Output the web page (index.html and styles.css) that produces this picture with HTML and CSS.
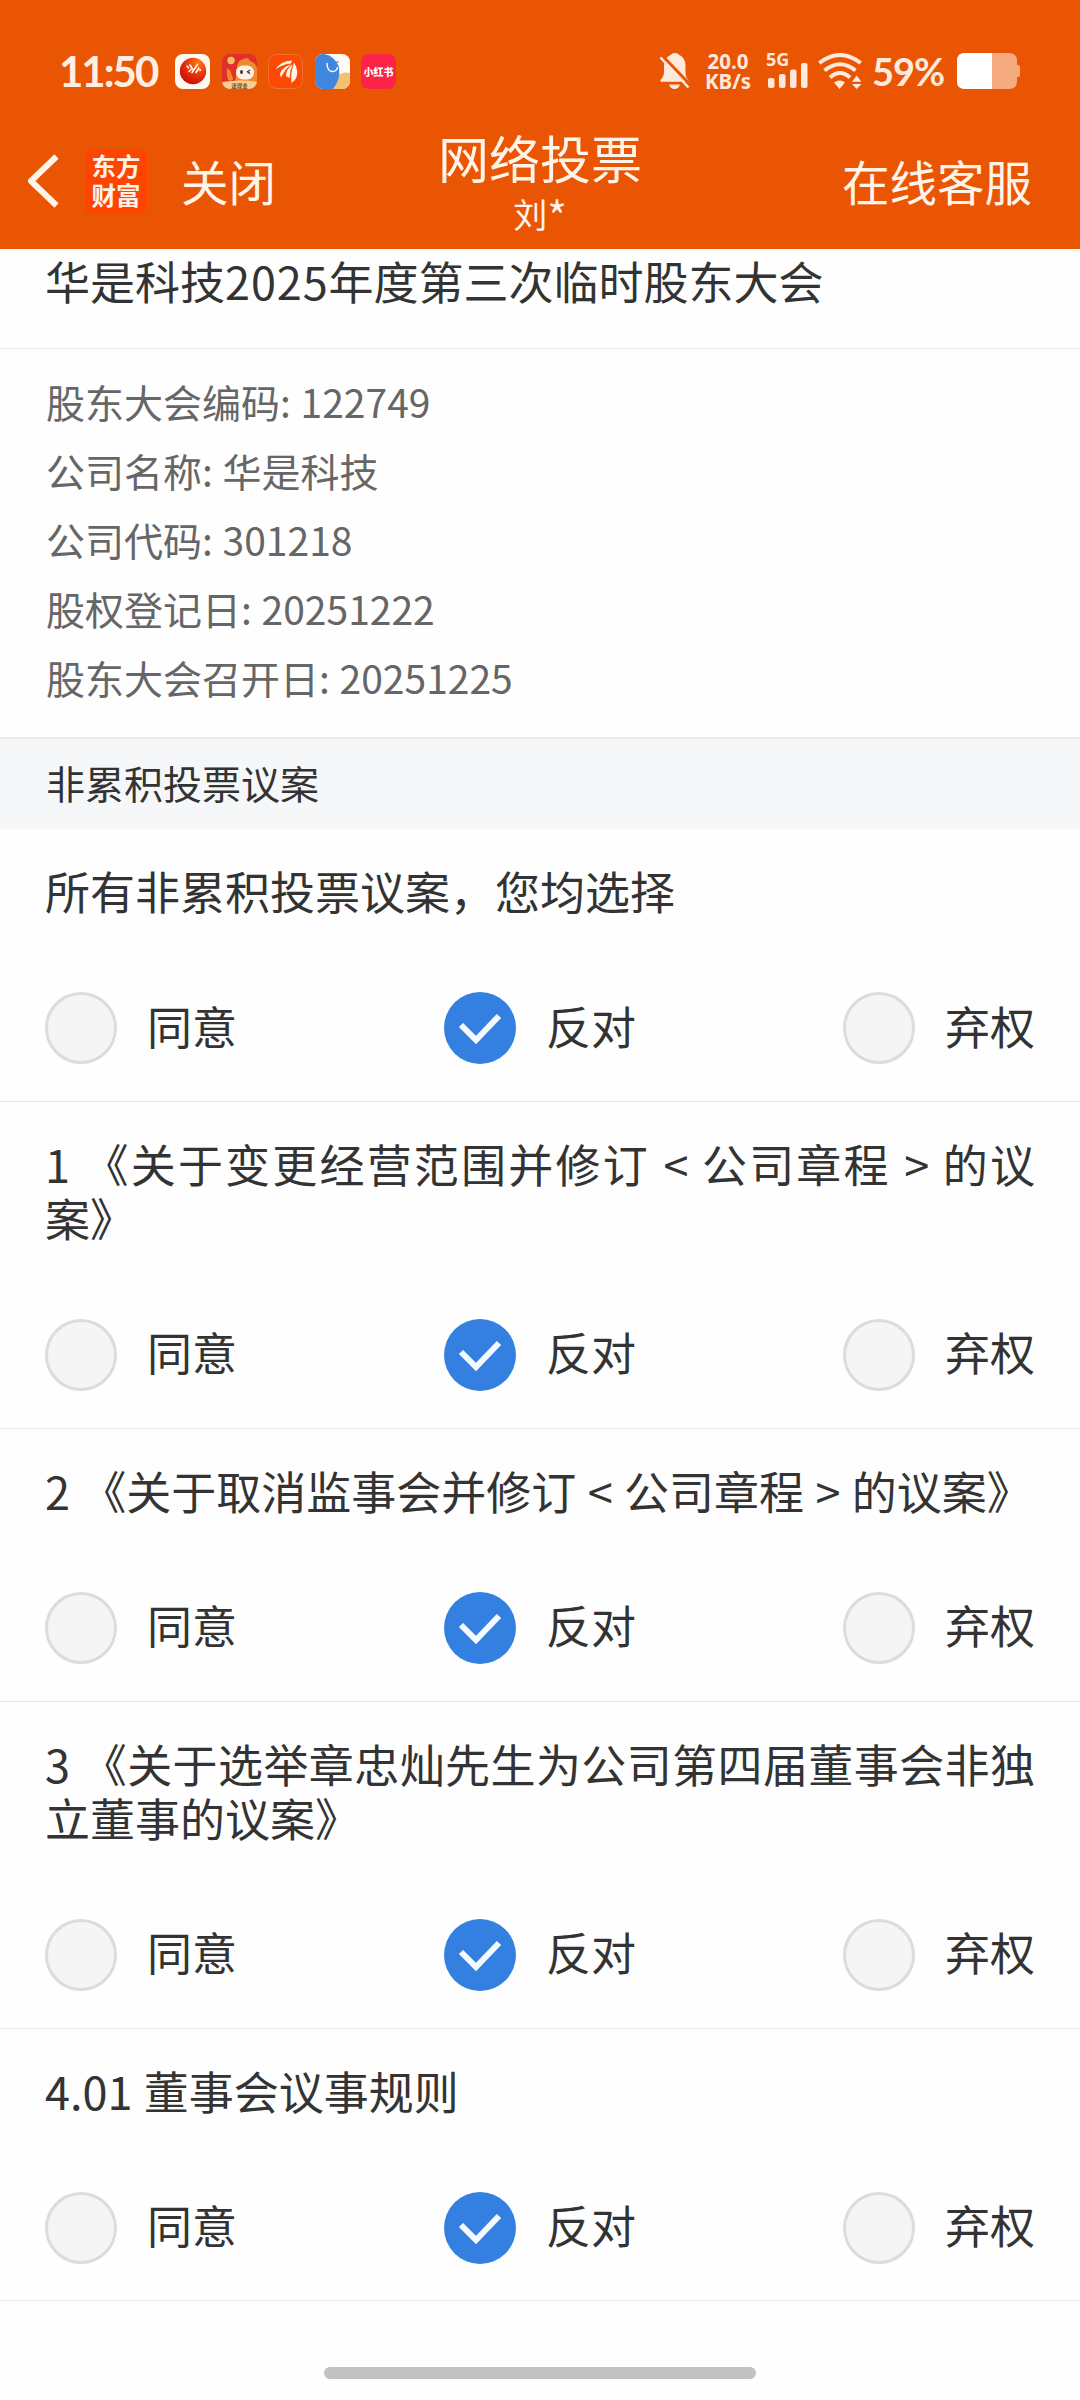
FILE: index.html
```html
<!DOCTYPE html>
<html lang="zh-CN">
<head>
<meta charset="utf-8">
<title>网络投票</title>
<link rel="stylesheet" href="styles.css">
</head>
<body>
<header class="header">
  <div class="status">
    <div class="status-left">
      <span class="time">11:50</span>
      <svg class="app" viewBox="0 0 35 35"><defs><radialGradient id="ball" cx=".7" cy=".2" r=".8"><stop offset="0" stop-color="#ff7a1c"/><stop offset=".5" stop-color="#ec3a0c"/><stop offset="1" stop-color="#c81408"/></radialGradient></defs><rect width="35" height="35" rx="8" fill="#fff8f2"/><circle cx="18" cy="17" r="13.2" fill="url(#ball)"/><path d="M12 12l1.500 2M15 11l2.500 4M14 17.500l2-2M17 18.500l5.500-8M21 18.500l3-4.500M25 16.500l.5-.8" stroke="#fff" stroke-width="1.500" fill="none" stroke-linecap="round"/></svg>
      <svg class="app" viewBox="0 0 35 35"><defs><clipPath id="tile"><rect width="35" height="35" rx="8"/></clipPath></defs><g clip-path="url(#tile)"><rect width="35" height="35" fill="#e0302c"/><path d="M15 12Q16 6 22 5Q26 2 28 7Q34 9 35 14V30H13z" fill="#f08a30"/><path d="M5 14q4 2 5 8q3 4-2 5q-4-1-3-13z" fill="#f08a30"/><circle cx="9" cy="6.500" r="3.700" fill="#fac060"/><rect x="14" y="11.500" width="18" height="14" rx="7" fill="#fff1e4"/><ellipse cx="19.500" cy="18" rx="1.500" ry="2" fill="#453431"/><path d="M28 16l-2.500 1.800 2.500 1.800" stroke="#453431" stroke-width="1.300" fill="none"/><path d="M0 28Q17 25 35 28V35H0z" fill="#f9cf90"/></g><text class="tiny" x="17.500" y="33.500" text-anchor="middle">送现金</text></svg>
      <svg class="app" viewBox="0 0 35 35"><rect x=".5" y=".5" width="34" height="34" rx="8" fill="#fc4a04" stroke="#f27230"/><path d="M7 16Q12 7 24 6.500L23 9.500Q14 10 7 16zM13 23.500Q11.500 21 12.500 18.500Q16 12 23.500 10.300Q17 15 13 23.500zM18 22Q18 15 24.500 10.500Q22 16 21.500 24zM23.500 29Q22 20 26 8.500Q32 18 27 26z" fill="#fff2e8"/></svg>
      <svg class="app" viewBox="0 0 35 35"><g clip-path="url(#tile)"><rect width="35" height="35" fill="#fefaf4"/><path d="M22 22Q28 17 35 19V35H18z" fill="#f2c274"/><path d="M0 0H9Q20 2 24 13Q26 25 18 35H0z" fill="#4186df"/></g><path d="M12 9Q12 18 18.500 17.500Q22 17 22.500 13" stroke="#f8faff" stroke-width="1.500" fill="none"/><circle cx="22.500" cy="8" r=".9" fill="#4186df"/></svg>
      <svg class="app" viewBox="0 0 35 35"><rect width="35" height="35" rx="8" fill="#fb2448"/><text class="red-text" x="17.500" y="21.500" text-anchor="middle">小红书</text></svg>
    </div>
    <div class="status-right">
      <svg class="bell" viewBox="0 0 32 36" fill="#ffe9dc"><path d="M16 0q3 0 4 1.800q6.500 3 6.500 11v7q0 5 4 9H1.500v-2q3.500-3 3.500-8v-6q0-8 7-11Q13 0 16 0z"/><path d="M10 31.500h11q-1.500 4.500-5.500 4.500t-5.500-4.500z"/><path d="M3 2.500L32 32.500" stroke="#ea5503" stroke-width="3"/><path d="M1.500 4.500L29.500 34.500" stroke="#ffe9dc" stroke-width="2.500"/></svg>
      <div class="speed"><span>20.0</span><span>KB/s</span></div>
      <div class="cell"><span>5G</span><svg viewBox="0 0 40 25" fill="#ffe9dc"><rect y="15" width="6.500" height="10" rx="2"/><rect x="11" y="11" width="6.500" height="14" rx="2"/><rect x="22" y="6.500" width="6.500" height="18.500" rx="2"/><rect x="33" y="0" width="6.500" height="25" rx="2"/></svg></div>
      <svg class="wifi" viewBox="0 0 44 36"><g fill="none" stroke="#ffe9dc" stroke-width="4"><path d="M1.300 10Q22-6 42.700 10"/><path d="M6.500 17.500Q22 5 37.500 17.500"/><path d="M12 24.500Q22 15.500 32 24.500"/></g><path d="M16 29.500q6-4 11 0l-5.500 6.500zM34 28.700L38.700 22.500l4.700 6.200zM34 31h9.400L38.700 36z" fill="#ffe9dc"/></svg>
      <span class="percent">59%</span>
      <svg class="battery" viewBox="0 0 63 36"><path d="M8 0H52q8 0 8 8v4h1q2 0 2 2v8q0 2-2 2h-1v4q0 8-8 8H8q-8 0-8-8V8q0-8 8-8z" fill="#f5aa80"/><path d="M8 0H35V36H8q-8 0-8-8V8q0-8 8-8z" fill="#fff"/></svg>
    </div>
  </div>
  <nav class="nav">
    <div class="nav-left">
      <svg class="back" viewBox="0 0 32 54"><path d="M29.500 2.500L4 27l25.500 24.500" fill="none" stroke="#fff4ea" stroke-width="6" stroke-linejoin="round"/></svg>
      <div class="logo"><span>东方</span><span>财富</span></div>
      <span class="nav-text">关闭</span>
    </div>
    <div class="nav-title"><h1>网络投票</h1><p>刘<span class="star">*</span></p></div>
    <span class="nav-text service">在线客服</span>
  </nav>
</header>
<main>
  <h2 class="meeting">华是科技<span class="year">2025</span>年度第三次临时股东大会</h2>
  <section class="info">
    <p>股东大会编码: 122749</p>
    <p>公司名称: 华是科技</p>
    <p>公司代码: 301218</p>
    <p>股权登记日: 20251222</p>
    <p>股东大会召开日: 20251225</p>
  </section>
  <h3 class="group">非累积投票议案</h3>
  <section class="item">
    <p class="subject">所有非累积投票议案，您均选择</p>
    <div class="options"><label class="opt"><i class="radio"></i><span>同意</span></label><label class="opt"><i class="radio on"><svg viewBox="0 0 72 72"><path d="M17 33L32 48L55 24"/></svg></i><span>反对</span></label><label class="opt"><i class="radio"></i><span>弃权</span></label></div>
  </section>
  <section class="item">
    <p class="subject">1 《关于变更经营范围并修订 &lt; 公司章程 &gt; 的议案》</p>
    <div class="options"><label class="opt"><i class="radio"></i><span>同意</span></label><label class="opt"><i class="radio on"><svg viewBox="0 0 72 72"><path d="M17 33L32 48L55 24"/></svg></i><span>反对</span></label><label class="opt"><i class="radio"></i><span>弃权</span></label></div>
  </section>
  <section class="item">
    <p class="subject">2 《关于取消监事会并修订 &lt; 公司章程 &gt; 的议案》</p>
    <div class="options"><label class="opt"><i class="radio"></i><span>同意</span></label><label class="opt"><i class="radio on"><svg viewBox="0 0 72 72"><path d="M17 33L32 48L55 24"/></svg></i><span>反对</span></label><label class="opt"><i class="radio"></i><span>弃权</span></label></div>
  </section>
  <section class="item">
    <p class="subject">3 《关于选举章忠灿先生为公司第四届董事会非独立董事的议案》</p>
    <div class="options"><label class="opt"><i class="radio"></i><span>同意</span></label><label class="opt"><i class="radio on"><svg viewBox="0 0 72 72"><path d="M17 33L32 48L55 24"/></svg></i><span>反对</span></label><label class="opt"><i class="radio"></i><span>弃权</span></label></div>
  </section>
  <section class="item">
    <p class="subject">4.01 董事会议事规则</p>
    <div class="options"><label class="opt"><i class="radio"></i><span>同意</span></label><label class="opt"><i class="radio on"><svg viewBox="0 0 72 72"><path d="M17 33L32 48L55 24"/></svg></i><span>反对</span></label><label class="opt"><i class="radio"></i><span>弃权</span></label></div>
  </section>
</main>
<footer class="home"><div class="home-bar"></div></footer>
</body>
</html>
```
FILE: styles.css
```css
* { box-sizing: border-box; margin: 0; padding: 0; }
body {
  width: 1080px;
  height: 2400px;
  overflow: hidden;
  display: flex;
  flex-direction: column;
  background: #fefefe;
  color: #333;
  font-family: "Noto Sans CJK SC", sans-serif;
}
h1, h2, h3 { font-weight: 400; }
svg { display: block; flex: none; }

.header { height: 249px; background: #ea5503; color: #fff4ea; }
.status {
  height: 110px;
  padding: 32px 60px 0 59px;
  display: flex;
  justify-content: space-between;
}
.status-left, .status-right { display: flex; align-items: center; height: 78px; }
.time { width: 116px; font: 700 42px/50px Lato, sans-serif; letter-spacing: -2px; color: #ffeee2; }
.app { width: 35px; height: 35px; margin-right: 11.6px; }
.tiny { font: 700 5.5px "Noto Sans CJK SC", sans-serif; fill: #7a4a20; }
.red-text { font: 900 10px "Noto Sans CJK SC", sans-serif; fill: #fff; }
.status-right { color: #ffe9dc; }
.bell { width: 32px; height: 36px; margin-right: 13px; }
.speed { width: 48px; display: flex; flex-direction: column; align-items: center; font: 700 20.5px/20px "Noto Sans", sans-serif; }
.cell { width: 40px; height: 40px; margin-left: 14px; font: 700 18px/16px "Noto Sans", sans-serif; display: flex; flex-direction: column; }
.cell svg { width: 40px; height: 25px; margin: -4px 0 0 2px; }
.wifi { width: 44px; height: 36px; margin-left: 12px; }
.percent { width: 95px; padding-left: 10px; font: 700 38px/44px Lato, sans-serif; letter-spacing: -1px; }
.battery { width: 63px; height: 36px; }

.nav { height: 139px; display: grid; grid-template-columns: 400px 1fr 400px; }
.nav-left { display: flex; align-items: center; padding: 3px 0 0 27px; }
.back { width: 32px; height: 54px; }
.logo {
  width: 62px;
  height: 64px;
  margin: 0 34px 0 26px;
  border-radius: 6px;
  background: #fd4400;
  display: flex;
  flex-direction: column;
  align-items: center;
  justify-content: center;
  font-size: 24.5px;
  line-height: 29px;
  padding-bottom: 3px;
  font-weight: 700;
}
.nav-text { font-size: 47.5px; line-height: 60px; }
.nav-title { text-align: center; padding-top: 15px; }
.nav-title h1 { font-size: 51px; line-height: 64px; white-space: nowrap; }
.nav-title p { font-size: 34px; line-height: 50px; }
.star { font-size: 42px; line-height: 1px; vertical-align: -5px; }
.service { align-self: center; text-align: right; padding: 2px 48px 0 0; }

.meeting { height: 100px; padding: 2px 45px 0; font-size: 45px; line-height: 60px; border-bottom: 1px solid #e8e8e8; }
.year { letter-spacing: 0.9px; }
.info { height: 388px; padding: 18px 45px 0 46px; color: #666; font-size: 39px; line-height: 69px; word-spacing: 1px; }
.group {
  height: 92px;
  padding: 0 46px;
  border-top: 2px solid #ebebeb;
  background: #f6f7f9;
  font-size: 39px;
  line-height: 86px;
}
.item { padding: 35px 45px 36.9px; border-bottom: 1px solid #e6e6e6; }
.subject { font-size: 45px; line-height: 54px; text-align: justify; word-spacing: 1.3px; }
.options { display: flex; justify-content: space-between; margin-top: 74px; }
.opt { display: flex; align-items: center; gap: 30px; height: 72px; }
.opt span { font-size: 45px; line-height: 60px; padding-bottom: 5px; }
.radio { width: 72px; height: 72px; border-radius: 50%; border: 3px solid #dcdcdc; background: #f5f5f5; }
.radio.on { border: 0; background: #3480e0; }
.radio svg { width: 72px; height: 72px; fill: none; stroke: #f4faff; stroke-width: 6; }

.home { margin-top: auto; padding-bottom: 21px; }
.home-bar { width: 432px; height: 12px; margin: 0 auto; border-radius: 6px; background: #c2c2c2; }
```
